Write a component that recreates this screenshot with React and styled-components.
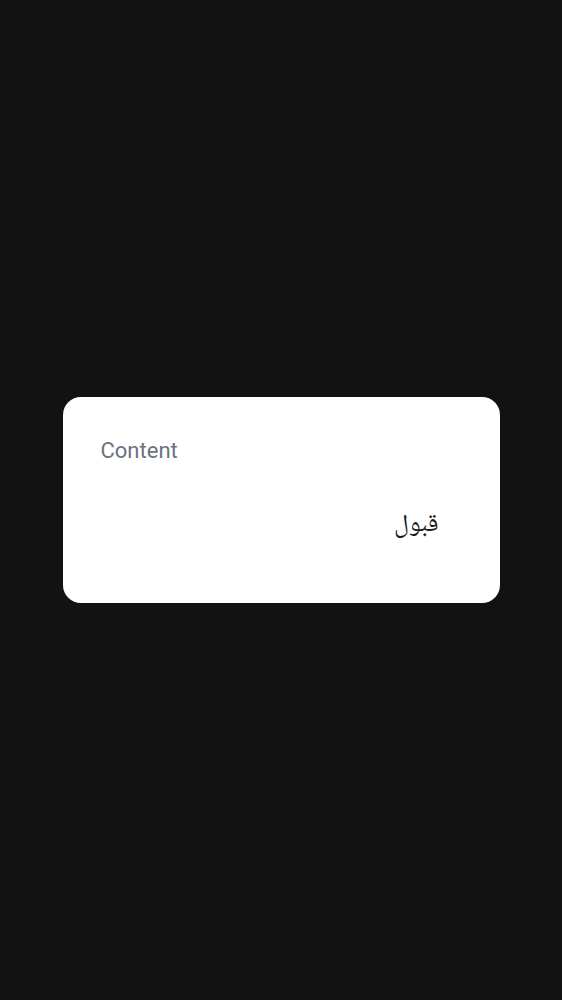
import React from 'react';
import styled, { createGlobalStyle } from 'styled-components';

const GlobalStyle = createGlobalStyle`
  html, body {
    margin: 0;
    padding: 0;
    background: #121212;
  }
  body {
    font-family: Roboto, sans-serif;
  }
`;

const Screen = styled.div`
  min-height: 1000px;
  display: flex;
  align-items: center;
  justify-content: center;
`;

const Dialog = styled.div`
  width: 437px;
  height: 206px;
  box-sizing: border-box;
  background: #ffffff;
  border-radius: 18px;
  padding: 38px 38px 0 38px;
  display: flex;
  flex-direction: column;
`;

const Message = styled.p`
  margin: 0;
  font-size: 22px;
  line-height: 32px;
  color: #6b7280;
`;

const Actions = styled.div`
  display: flex;
  justify-content: flex-end;
  margin-top: 43px;
`;

const TextButton = styled.button`
  border: none;
  background: transparent;
  padding: 0 23px 0 16px;
  font-family: "Noto Naskh Arabic", "Noto Sans Arabic UI", "Noto Sans Arabic", Amiri, "Droid Arabic Naskh", "FreeSans", "FreeSerif", Roboto, sans-serif;
  font-size: 25px;
  line-height: 32px;
  color: #1c1c1c;
  cursor: pointer;
`;

export default function App() {
  return (
    <>
      <GlobalStyle />
      <Screen>
        <Dialog role="dialog">
          <Message>Content</Message>
          <Actions>
            <TextButton dir="rtl">قبول</TextButton>
          </Actions>
        </Dialog>
      </Screen>
    </>
  );
}
